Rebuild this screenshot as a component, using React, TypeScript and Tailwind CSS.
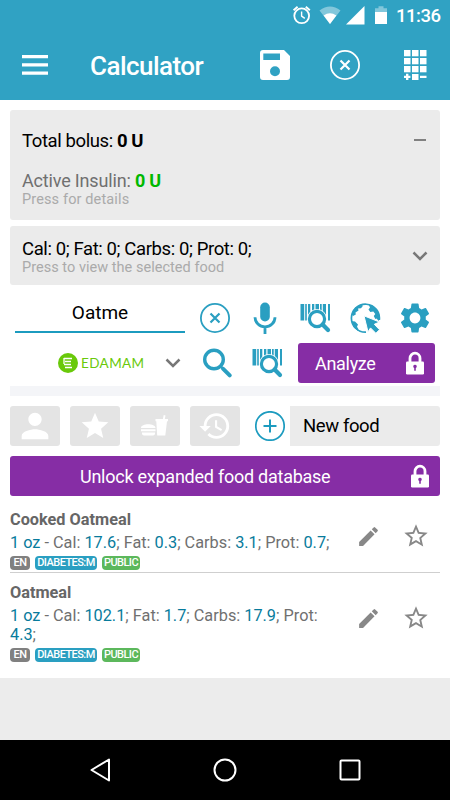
import type { ReactNode } from "react";
import {
  MdEdit,
  MdHistory,
  MdPerson,
  MdSettings,
  MdStar,
  MdStarBorder,
} from "react-icons/md";

const foods = [
  {
    name: "Cooked Oatmeal",
    cal: "17.6",
    fat: "0.3",
    carbs: "3.1",
    prot: "0.7",
    row: "h-[77px] border-b border-[#cfcfcf] pt-[14px]",
    actions: "mt-[12px]",
  },
  {
    name: "Oatmeal",
    cal: "102.1",
    fat: "1.7",
    carbs: "17.9",
    prot: "4.3",
    row: "h-[105px] pt-[10px]",
    actions: "mt-[21px]",
  },
];

function StatusBar() {
  return (
    <div className="flex h-[30px] items-center justify-end pr-[9px] text-white">
      <svg width="98" height="20" viewBox="292 5 98 20" className="mr-[6px]">
        {/* alarm */}
        <g fill="none" stroke="#fff" strokeWidth="1.8">
          <circle cx="301.7" cy="15.8" r="7.4" />
          <path d="M301.6 11.5v4.7l3.2 2.2" strokeWidth="1.4" />
          <path d="M293.6 10.2l4-3.4M309.8 10.2l-4-3.4" strokeWidth="2" />
        </g>
        {/* wifi */}
        <path d="M319.5 10.5Q330 2.500 340.500 10.500L330 24z" fill="#fff" opacity=".4" />
        <path d="M323.600 15.400Q330 11 336.400 15.400L330 24z" fill="#fff" />
        {/* signal and battery */}
        <path d="M346 24.500L364.500 6v18.500z" fill="#fff" />
        <path d="M375 12V8.200h3.500V6.300h5v1.900h3.500V12z" fill="#fff" opacity=".4" />
        <path d="M375 12h12v12h-12z" fill="#fff" />
      </svg>
      <span className="w-[45px] whitespace-nowrap pt-px text-[18.500px] font-medium leading-5 tracking-[-0.5px]">
        11:36
      </span>
    </div>
  );
}

function SaveIcon() {
  return (
    <svg width="30" height="30" viewBox="0 0 30 30">
      <path
        fill="#fff"
        fillRule="evenodd"
        d="M3 0h21l6 6v21a3 3 0 0 1-3 3H3a3 3 0 0 1-3-3V3a3 3 0 0 1 3-3zM3.300 3.500v6.500H20V3.500zM15 16.300a5 5 0 1 0 0 10a5 5 0 1 0 0-10z"
      />
    </svg>
  );
}

function CloseCircle({ color }: { color: string }) {
  return (
    <svg width="30" height="30" viewBox="0 0 30 30" fill="none" stroke={color}>
      <circle cx="15" cy="15" r="14.100" strokeWidth="1.800" />
      <path d="M10.500 10.500l9 9M19.500 10.500l-9 9" strokeWidth="2.200" />
    </svg>
  );
}

function KeypadIcon() {
  return (
    <svg width="23" height="30" viewBox="0 0 23 30" fill="#fff">
      {[0, 8, 16].map((y) =>
        [0, 8, 16].map((x) => <rect key={`${x}-${y}`} x={x} y={y} width="6.500" height="6.300" />)
      )}
      <rect x="8" y="24" width="6.500" height="6" />
      <path d="M0 25.700h2v-2h2.400v2h2v2.400h-2v2H2v-2H0zM16 25.700h6.500v2.400H16z" />
    </svg>
  );
}

function MicIcon() {
  return (
    <svg width="24" height="32" viewBox="0 0 24 32">
      <rect x="7.200" y=".5" width="9.600" height="19" rx="4.800" fill="#2a9fc1" />
      <path
        d="M2 15.200a10 9.700 0 0 0 20 0M12 25v7"
        fill="none"
        stroke="#2a9fc1"
        strokeWidth="2.800"
      />
    </svg>
  );
}

function BarcodeSearch() {
  return (
    <svg width="31" height="29" viewBox="0 0 31 29">
      <path
        fill="#2a9fc1"
        d="M.5 0h3.700v16.500H.5zM5.200 0h1.600v16.500H5.200zM8 0h2.300v14H8zM12 0h2.300v9H12zM15.500 0h3.500v7h-3.500zM20 0h1.700v8H20zM22.800 0h3.200v13h-3.200zM28 0h2v16.500h-2z"
      />
      <circle cx="17" cy="15" r="10" fill="#fff" />
      <circle cx="17" cy="15" r="7.600" fill="#fff" stroke="#2a9fc1" strokeWidth="3.200" />
      <path d="M22.600 20.600L28 26" stroke="#2a9fc1" strokeWidth="4.200" strokeLinecap="round" />
    </svg>
  );
}

function SearchIcon() {
  return (
    <svg width="30" height="30" viewBox="0 0 30 30" fill="none" stroke="#2a9fc1">
      <circle cx="12" cy="11.500" r="9.300" strokeWidth="3.400" />
      <path d="M18.700 18.300l2.500 2.500" strokeWidth="2.600" />
      <path d="M21.200 20.800l6.500 6.500" strokeWidth="4" strokeLinecap="round" />
    </svg>
  );
}

function GlobeIcon() {
  return (
    <svg width="31" height="31" viewBox="0 0 31 31" fill="#2a9fc1">
      <path
        d="M29.300 17A14 14 0 1 0 16 29.200"
        fill="none"
        stroke="#2a9fc1"
        strokeWidth="1.700"
      />
      <path d="M1.500 11L5 4.500L11 1.500l2 1.300-2 2.400-3 .3.500 2-3 2 .3 2-2.800 1.500z" />
      <path d="M18.500 1.500l4.500 1.300 4.500 4.200 2.300 6-1 5-2.300-2.500-1.200.5-1.500-3 1.500-2-2-2.500-3 .5-1.800-2.500 1.500-2z" />
      <path d="M1 18l4 .5 3 3-1 2.300 1.500 2.500-.5 1.800L4 24.500z" />
      <path
        d="M14 12.800l15.500 6.200-5.200 2.300 5.200 5.400-3.600 3.600-5.400-5.400-2.500 4z"
        stroke="#fff"
        strokeWidth="1"
      />
    </svg>
  );
}

function LockIcon() {
  return (
    <svg width="18" height="24" viewBox="0 0 18 24">
      <path d="M4 12V7.200a5 5 0 0 1 10 0V12" fill="none" stroke="#fff" strokeWidth="2.800" />
      <rect y="10.500" width="18" height="13" rx="1.200" fill="#fff" />
      <path d="M9 13.700a1.800 1.800 0 0 1 .8 3.400v2.700H8.200v-2.700a1.800 1.800 0 0 1 .8-3.400z" fill="#862da5" />
    </svg>
  );
}

function FoodIcon() {
  return (
    <svg width="28" height="22" viewBox="0 0 28 22" fill="#fff">
      <path d="M0 13c0-5 14.500-5 14.500 0zM0 14.200h14.500v2H0zM1 17.400h13v1.100c0 1.200-1 1.900-2 1.900H3c-1 0-2-.700-2-1.900z" />
      <path d="M14.500 4h7.400l.8-4 1.800.4-.700 3.600H27v2.200h-1L24.300 20.400h-8.100L15.300 6.200h-.8z" />
    </svg>
  );
}

function Chevron() {
  return (
    <svg width="16" height="10" viewBox="0 0 16 10" fill="none" stroke="#777" strokeWidth="2.500">
      <path d="M1.500 1.500L8 8l6.500-6.500" />
    </svg>
  );
}

function FilterButton({ children }: { children: ReactNode }) {
  return (
    <button className="flex h-10 w-[50px] items-center justify-center rounded-[3px] bg-[#e4e4e4] text-white">
      {children}
    </button>
  );
}

function Tag({ className, children }: { className: string; children: ReactNode }) {
  return (
    <span
      className={`flex h-[14px] items-center justify-center whitespace-nowrap rounded-[4px] text-[11px] font-medium leading-[14px] tracking-[-0.55px] text-white ${className}`}
    >
      {children}
    </span>
  );
}

function Value({ children }: { children: ReactNode }) {
  return <span className="text-[#087b9c]">{children}</span>;
}

export default function App() {
  return (
    <div className="flex h-[800px] w-[450px] flex-col overflow-hidden bg-[#ececec] font-['Roboto',sans-serif]">
      <header className="h-[100px] shrink-0 bg-[#30a2c3]">
        <StatusBar />
        <div className="flex h-[70px] items-center pl-[22px]">
          <svg width="26" height="20" viewBox="0 0 26 20" fill="#fff">
            <path d="M0 0h26v3.300H0zM0 8.200h26v3.300H0zM0 16.400h26v3.300H0z" />
          </svg>
          <h1 className="ml-[42px] w-[170px] pt-[2px] text-[26px] font-medium leading-8 tracking-[-0.55px] text-white">
            Calculator
          </h1>
          <SaveIcon />
          <div className="ml-10">
            <CloseCircle color="#fff" />
          </div>
          <div className="ml-[44px]">
            <KeypadIcon />
          </div>
        </div>
      </header>

      <main className="h-[578px] shrink-0 bg-white px-[10px] pt-[10px]">
        <section className="flex h-[110px] justify-between rounded-[3px] bg-[#ebebeb] pl-3 pr-[14px]">
          <div className="pt-5">
            <p className="text-[18.500px] leading-[22px] tracking-[-0.4px] text-black">
              Total bolus: <b>0 U</b>
            </p>
            <p className="mt-[18px] text-[18px] leading-[22px] tracking-[-0.17px] text-[#707070]">
              Active Insulin: <b className="text-[#00b800]">0 U</b>
            </p>
            <p className="text-[14.500px] leading-4 tracking-[0.13px] text-[#aaa]">
              Press for details
            </p>
          </div>
          <div className="mt-[29px] h-[2px] w-3 bg-[#808080]" />
        </section>

        <section className="mt-[6px] flex h-[59px] items-center justify-between rounded-[3px] bg-[#ebebeb] pl-3 pr-3">
          <div className="pt-[2px]">
            <p className="text-[18.500px] leading-[22px] tracking-[-0.39px] text-black">
              Cal: 0; Fat: 0; Carbs: 0; Prot: 0;
            </p>
            <p className="text-[14.500px] leading-4 tracking-[0.03px] text-[#aaa]">
              Press to view the selected food
            </p>
          </div>
          <Chevron />
        </section>

        <div className="mt-[15px] flex h-9 items-center pl-[5px]">
          <div className="mb-[4px] flex h-[33px] w-[170px] items-center justify-center border-b-2 border-[#1c9bbf] pb-[4px] text-[19px] leading-6 text-black">
            Oatme
          </div>
          <div className="ml-[15px]">
            <CloseCircle color="#2a9fc1" />
          </div>
          <div className="ml-[23px]">
            <MicIcon />
          </div>
          <div className="ml-[23px]">
            <BarcodeSearch />
          </div>
          <div className="ml-[19px]">
            <GlobeIcon />
          </div>
          <MdSettings className="ml-[16px] size-9 shrink-0 text-[#2a9fc1]" />
        </div>

        <div className="mt-[7px] flex h-10 items-center pl-12">
          <svg width="20" height="20" viewBox="0 0 20 20">
            <circle cx="10" cy="10" r="10" fill="#69c90a" />
            <path
              d="M6 5.500h8M7 8.500h6M6 11.500h7M7 14.500h7M6 5v6"
              fill="none"
              stroke="#fff"
              strokeWidth="1.300"
            />
          </svg>
          <span className="ml-[3px] w-[84px] font-['Lato',sans-serif] text-[13.500px] leading-5 tracking-[0.4px] text-[#69c90a]">
            EDAMAM
          </span>
          <Chevron />
          <div className="ml-[21px]">
            <SearchIcon />
          </div>
          <div className="ml-[20px]">
            <BarcodeSearch />
          </div>
          <button className="ml-[15px] flex h-10 w-[137px] items-center justify-between rounded-[3px] bg-[#862da5] pl-[17px] pr-[11px] text-[18px] tracking-[-0.3px] text-white">
            Analyze
            <LockIcon />
          </button>
        </div>

        <div className="mt-[3px] h-[10px] bg-[#f4f5f8]" />

        <div className="mt-[10px] flex h-10 items-center">
          <div className="flex gap-[10px]">
            <FilterButton>
              <MdPerson className="size-10" />
            </FilterButton>
            <FilterButton>
              <MdStar className="size-8" />
            </FilterButton>
            <FilterButton>
              <FoodIcon />
            </FilterButton>
            <FilterButton>
              <MdHistory className="size-[34px]" />
            </FilterButton>
          </div>
          <svg
            width="30"
            height="30"
            viewBox="0 0 30 30"
            fill="none"
            stroke="#1c9bbf"
            className="ml-[15px]"
          >
            <circle cx="15" cy="15" r="14.200" strokeWidth="1.700" />
            <path d="M8.500 15h13M15 8.500v13" strokeWidth="2" />
          </svg>
          <button className="ml-[5px] h-10 w-[150px] rounded-r-[3px] bg-[#ebebeb] pl-[13px] pt-[2px] text-left text-[18.500px] tracking-[-0.4px] text-black">
            New food
          </button>
        </div>

        <button className="mt-[10px] flex h-10 w-full items-center justify-between rounded-[3px] bg-[#862da5] pl-[70px] pr-[11px] text-[18px] tracking-[-0.25px] text-white">
          Unlock expanded food database
          <LockIcon />
        </button>

        {foods.map((food) => (
          <div key={food.name} className={`flex ${food.row}`}>
            <div className="w-[330px]">
              <h2 className="text-[16.300px] font-bold leading-5 text-[#666]">{food.name}</h2>
              <p className="mt-[3px] w-[324px] text-[16.300px] leading-[19px] text-[#707070]">
                <Value>1 oz</Value> - Cal: <Value>{food.cal}</Value>; Fat: <Value>{food.fat}</Value>
                ; Carbs: <Value>{food.carbs}</Value>; Prot: <Value>{food.prot}</Value>;
              </p>
              <div className="mt-[4px] flex gap-[5px]">
                <Tag className="w-5 bg-[#808080]">EN</Tag>
                <Tag className="w-[62px] bg-[#2a9fc1]">DIABETES:M</Tag>
                <Tag className="w-[38px] bg-[#5cb85c]">PUBLIC</Tag>
              </div>
            </div>
            <div className={`flex h-7 items-center ${food.actions}`}>
              <MdEdit className="ml-4 size-[25px] text-[#888]" />
              <MdStarBorder className="ml-[21px] size-7 text-[#888]" />
            </div>
          </div>
        ))}
      </main>

      <nav className="mt-auto flex h-[60px] shrink-0 items-center justify-between bg-black pl-[90px] pr-[89px]">
        <svg width="20" height="24" viewBox="0 0 20 24" fill="none" stroke="#fff">
          <path d="M1.500 12L19 1.500v21z" strokeWidth="2" strokeLinejoin="round" />
        </svg>
        <svg width="24" height="24" viewBox="0 0 24 24" fill="none" stroke="#fff">
          <circle cx="12" cy="12" r="10.500" strokeWidth="2" />
        </svg>
        <svg width="22" height="22" viewBox="0 0 22 22" fill="none" stroke="#fff">
          <rect x="1.500" y="1.500" width="19" height="19" rx="1" strokeWidth="2" />
        </svg>
      </nav>
    </div>
  );
}
